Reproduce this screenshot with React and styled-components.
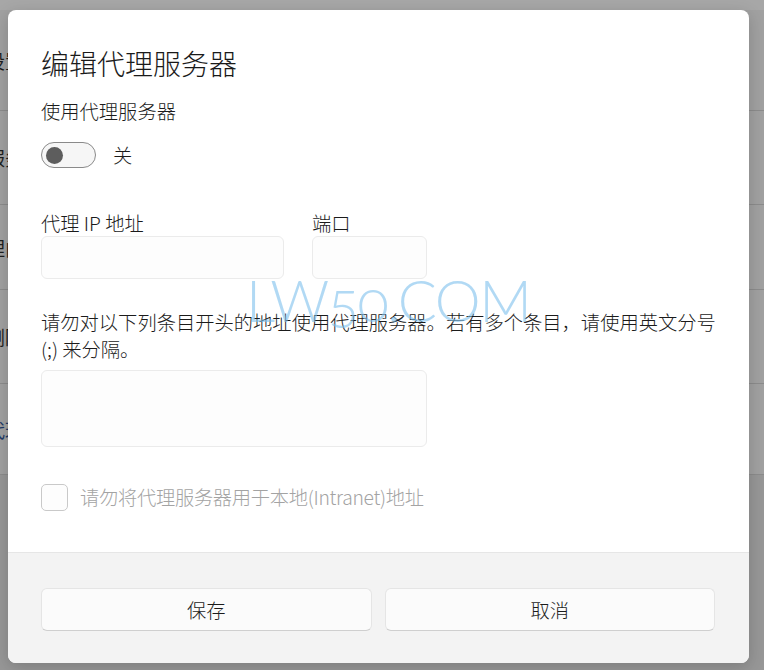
import styled, { createGlobalStyle } from "styled-components";

const GlobalStyle = createGlobalStyle`
  html, body {
    margin: 0;
    padding: 0;
  }
  body {
    width: 764px;
    height: 670px;
    overflow: hidden;
    font-family: "Noto Sans CJK SC", "Noto Sans", sans-serif;
  }
`;

const bgRows = [
  { text: "设置代理", height: 100 },
  { text: "服务器", height: 93 },
  { text: "理由", height: 84 },
  { text: "删除", height: 93 },
  { text: "代理", height: 90, link: true },
];

const App = () => {
  return (
    <Page>
      <GlobalStyle />
      <TopStrip />
      <BgList>
        {bgRows.map((row) => (
          <BgRow key={row.text} height={row.height} link={row.link}>
            {row.text}
          </BgRow>
        ))}
      </BgList>

      <Dialog>
        <Body>
          <Title>编辑代理服务器</Title>
          <Label>使用代理服务器</Label>
          <ToggleRow>
            <Toggle>
              <Knob />
            </Toggle>
            <ToggleText>关</ToggleText>
          </ToggleRow>

          <FieldsRow>
            <Field>
              <FieldLabel>代理 IP 地址</FieldLabel>
              <TextBox width={243} />
            </Field>
            <Field>
              <FieldLabel>端口</FieldLabel>
              <TextBox width={115} />
            </Field>
          </FieldsRow>

          <Paragraph>
            请勿对以下列条目开头的地址使用代理服务器。若有多个条目，请使用英文分号
            (;) 来分隔。
          </Paragraph>
          <TextArea />

          <CheckRow>
            <CheckBox />
            <CheckLabel>请勿将代理服务器用于本地(Intranet)地址</CheckLabel>
          </CheckRow>
        </Body>

        <Footer>
          <Button>保存</Button>
          <Button>取消</Button>
        </Footer>
      </Dialog>

      <Watermark>LW50.COM</Watermark>
    </Page>
  );
};

export default App;

const Page = styled.div`
  position: relative;
  width: 764px;
  height: 670px;
  background: #979797;
  overflow: hidden;
`;

const TopStrip = styled.div`
  height: 10px;
  background: #a7a7a7;
`;

const BgList = styled.div`
  display: flex;
  flex-direction: column;
  margin-left: -14px;
`;

const BgRow = styled.div`
  display: flex;
  align-items: center;
  height: ${({ height }) => height}px;
  border-bottom: 1px solid #8c8c8c;
  background: #a1a1a1;
  font-size: 19px;
  color: ${({ link }) => (link ? "#1f3a66" : "#1e1e1e")};
`;

const Dialog = styled.div`
  position: absolute;
  left: 8px;
  top: 10px;
  width: 741px;
  height: 653px;
  display: flex;
  flex-direction: column;
  background: #ffffff;
  border-radius: 8px;
  overflow: hidden;
  box-shadow: 0 4px 16px rgba(0, 0, 0, 0.18);
`;

const Body = styled.div`
  flex: 1;
  display: flex;
  flex-direction: column;
  align-items: flex-start;
  padding: 35px 26px 0 33px;
  color: #1b1b1b;
  font-size: 19.3px;
  font-weight: 300;
`;

const Title = styled.div`
  font-size: 28px;
  line-height: 36px;
  color: #1a1a1a;
`;

const Label = styled.div`
  margin-top: 17px;
  line-height: 26px;
`;

const ToggleRow = styled.div`
  display: flex;
  align-items: center;
  gap: 17px;
  margin-top: 18px;
`;

const Toggle = styled.div`
  box-sizing: border-box;
  width: 55px;
  height: 26px;
  border: 1.5px solid #8a8a8a;
  border-radius: 13px;
  background: #f6f6f6;
  display: flex;
  align-items: center;
  padding-left: 3.5px;
`;

const Knob = styled.div`
  width: 17px;
  height: 17px;
  border-radius: 50%;
  background: #5d5d5d;
`;

const ToggleText = styled.span`
  line-height: 26px;
`;

const FieldsRow = styled.div`
  display: flex;
  gap: 28px;
  margin-top: 43px;
`;

const Field = styled.div`
  display: flex;
  flex-direction: column;
`;

const FieldLabel = styled.div`
  line-height: 25px;
`;

const TextBox = styled.div`
  box-sizing: border-box;
  width: ${({ width }) => width}px;
  height: 43px;
  border: 1px solid #ebebeb;
  border-radius: 6px;
  background: #fdfdfd;
`;

const Paragraph = styled.p`
  margin: 30px 0 0;
  line-height: 27px;
`;

const TextArea = styled.div`
  box-sizing: border-box;
  width: 386px;
  height: 77px;
  margin-top: 7px;
  border: 1px solid #ebebeb;
  border-radius: 6px;
  background: #fdfdfd;
`;

const CheckRow = styled.div`
  display: flex;
  align-items: center;
  gap: 12px;
  margin-top: 37px;
`;

const CheckBox = styled.div`
  box-sizing: border-box;
  width: 27px;
  height: 27px;
  border: 1px solid #c9c9c9;
  border-radius: 5px;
  background: #fdfdfd;
`;

const CheckLabel = styled.span`
  color: #a3a3a3;
  line-height: 27px;
  letter-spacing: -0.3px;
`;

const Footer = styled.div`
  height: 111px;
  box-sizing: border-box;
  display: flex;
  gap: 13px;
  padding: 35px 34px 0 33px;
  background: #f3f3f3;
  border-top: 1px solid #e6e6e6;
`;

const Button = styled.button`
  flex: 1;
  height: 43px;
  box-sizing: border-box;
  border: 1px solid #e5e5e5;
  border-bottom-color: #cfcfcf;
  border-radius: 6px;
  background: #fbfbfb;
  color: #1b1b1b;
  font-family: inherit;
  font-size: 19.3px;
  font-weight: 300;
  padding: 0;
`;

const Watermark = styled.div`
  position: absolute;
  left: 246px;
  top: 268px;
  font-family: Lato, "DejaVu Sans", sans-serif;
  font-weight: 300;
  font-size: 58px;
  line-height: 64px;
  letter-spacing: -1.5px;
  font-variant-numeric: oldstyle-nums;
  color: rgba(125, 192, 236, 0.6);
  pointer-events: none;
`;
